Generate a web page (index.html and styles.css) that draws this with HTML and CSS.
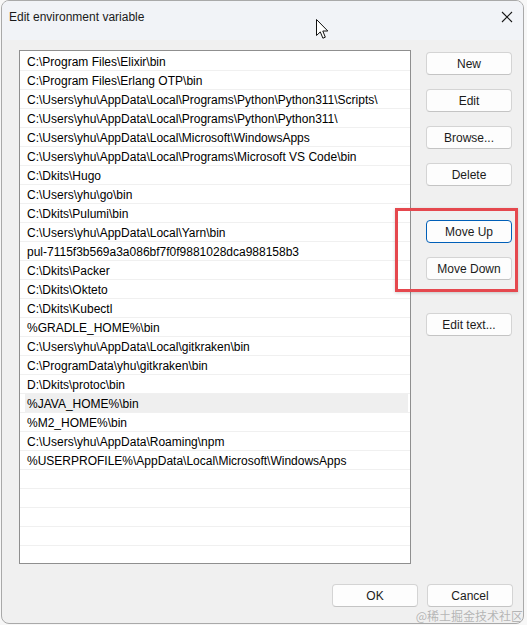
FILE: index.html
```html
<!DOCTYPE html>
<html>
<head>
<meta charset="utf-8">
<link rel="stylesheet" href="styles.css">
</head>
<body>
<div class="window">
  <div class="titlebar">
    <span class="title">Edit environment variable</span>
    <svg class="close" width="12" height="12" viewBox="0 0 12 12"><path d="M1 1L11 11M11 1L1 11" stroke="#1a1a1a" stroke-width="1.1" fill="none"/></svg>
  </div>
  <div class="content">
    <div class="main">
      <div class="list">
        <div class="row">C:\Program Files\Elixir\bin</div>
        <div class="row">C:\Program Files\Erlang OTP\bin</div>
        <div class="row">C:\Users\yhu\AppData\Local\Programs\Python\Python311\Scripts\</div>
        <div class="row">C:\Users\yhu\AppData\Local\Programs\Python\Python311\</div>
        <div class="row">C:\Users\yhu\AppData\Local\Microsoft\WindowsApps</div>
        <div class="row">C:\Users\yhu\AppData\Local\Programs\Microsoft VS Code\bin</div>
        <div class="row">C:\Dkits\Hugo</div>
        <div class="row">C:\Users\yhu\go\bin</div>
        <div class="row">C:\Dkits\Pulumi\bin</div>
        <div class="row">C:\Users\yhu\AppData\Local\Yarn\bin</div>
        <div class="row">pul-7115f3b569a3a086bf7f0f9881028dca988158b3</div>
        <div class="row">C:\Dkits\Packer</div>
        <div class="row">C:\Dkits\Okteto</div>
        <div class="row">C:\Dkits\Kubectl</div>
        <div class="row">%GRADLE_HOME%\bin</div>
        <div class="row">C:\Users\yhu\AppData\Local\gitkraken\bin</div>
        <div class="row">C:\ProgramData\yhu\gitkraken\bin</div>
        <div class="row">D:\Dkits\protoc\bin</div>
        <div class="row selected">%JAVA_HOME%\bin</div>
        <div class="row">%M2_HOME%\bin</div>
        <div class="row">C:\Users\yhu\AppData\Roaming\npm</div>
        <div class="row">%USERPROFILE%\AppData\Local\Microsoft\WindowsApps</div>
        <div class="row"></div>
        <div class="row"></div>
        <div class="row"></div>
        <div class="row"></div>
        <div class="row"></div>
        <div class="row"></div>
      </div>
      <div class="side">
        <button class="btn b-new">New</button>
        <button class="btn b-gap">Edit</button>
        <button class="btn b-gap">Browse...</button>
        <button class="btn b-gap">Delete</button>
        <button class="btn b-big focus">Move Up</button>
        <button class="btn b-gap">Move Down</button>
        <button class="btn b-big2">Edit text...</button>
      </div>
    </div>
    <div class="footer">
      <button class="btn">OK</button>
      <button class="btn">Cancel</button>
    </div>
  </div>
  <div class="highlight"></div>
  <svg class="cursor" width="13" height="21" viewBox="0 0 13 21"><path d="M0.5 0.5V16.5L4.3 12.9L6.9 19.2L9.3 18.2L6.8 12H11.8Z" fill="#fff" stroke="#111" stroke-width="1" stroke-linejoin="round"/></svg>
  <div class="watermark">@稀土掘金技术社区</div>
</div>
</body>
</html>
```
FILE: styles.css
```css
html, body {
  margin: 0;
  padding: 0;
  background: #f7f7f7;
}
body {
  font-family: "Liberation Sans", Arial, sans-serif;
  font-size: 12px;
  color: #000;
}
.window {
  position: relative;
  margin-left: 1px;
  width: 521px;
  height: 622px;
  border: 1px solid #a9a9a9;
  border-radius: 8px;
  background: #f0f0f0;
  overflow: hidden;
}
.titlebar {
  height: 39px;
  background: #f1f3f7;
  display: flex;
  align-items: center;
  justify-content: space-between;
  padding: 0 8px 8px 7px;
  box-sizing: border-box;
}
.title {
  font-size: 12px;
  color: #1a1a1a;
}
.close {
  margin-right: 2px;
  margin-top: 1px;
}
.main {
  display: flex;
  padding: 10px 0 0 17px;
}
.list {
  width: 392px;
  height: 514px;
  box-sizing: border-box;
  border: 1px solid #8f8f8f;
  background: #fff;
  overflow: hidden;
  padding-top: 1px;
}
.row {
  height: 18px;
  line-height: 20px;
  border-bottom: 1px solid #f0f0f0;
  padding-left: 7px;
  white-space: nowrap;
}
.row.selected {
  background: linear-gradient(to right, transparent 5px, #efefef 5px, #efefef calc(100% - 2px), transparent calc(100% - 2px));
}
.side {
  display: flex;
  flex-direction: column;
  margin-left: 15px;
  padding-top: 2px;
}
.btn {
  width: 86px;
  height: 23px;
  box-sizing: border-box;
  border: 1px solid #d4d4d4;
  border-bottom-color: #c4c4c4;
  border-radius: 4px;
  background: #fdfdfd;
  font-family: "Liberation Sans", Arial, sans-serif;
  font-size: 12px;
  color: #1b1b1b;
  padding: 0;
  margin: 0;
}
.b-gap { margin-top: 14px; }
.b-big { margin-top: 34px; }
.b-big2 { margin-top: 33px; }
.btn.focus {
  border: 1px solid #005fb8;
}
.footer {
  display: flex;
  justify-content: flex-end;
  gap: 9px;
  padding: 20px 10px 0 0;
}
.highlight {
  position: absolute;
  left: 393px;
  top: 207px;
  width: 123px;
  height: 84px;
  box-sizing: border-box;
  border: 3px solid #e5484e;
  box-shadow: 0 1px 3px rgba(0,0,0,0.18);
}
.cursor {
  position: absolute;
  left: 314px;
  top: 18px;
}
.watermark {
  position: absolute;
  right: 0;
  bottom: 0;
  font-family: "Noto Sans CJK SC", sans-serif;
  font-size: 12px;
  line-height: 14px;
  color: rgba(130,130,130,0.55);
  white-space: nowrap;
}
```
